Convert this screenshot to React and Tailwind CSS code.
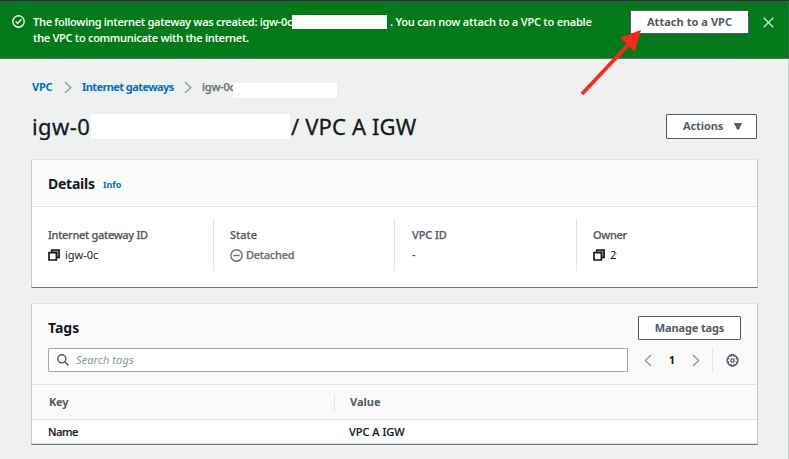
function Chevron({ left = false, className = "" }) {
  return (
    <svg className={`shrink-0 ${className}`} width="8" height="13" viewBox="0 0 8 13" fill="none" stroke="currentColor" strokeWidth="1.6">
      <path d={left ? "M7 1 1.3 6.5 7 12" : "M1 1l5.7 5.5L1 12"} />
    </svg>
  );
}

function CopyIcon() {
  return (
    <svg className="shrink-0" width="12" height="12" viewBox="0 0 12 12" fill="none">
      <path d="M3.7 3V1h7.4v7.4H9" fill="#9a9da1" stroke="#16191f" strokeWidth="1.6" />
      <path d="M1 3.6h7.4V11H1z" fill="#fff" stroke="#16191f" strokeWidth="1.7" />
    </svg>
  );
}

function Field({ label, labelClass = "", children, className = "" }) {
  return (
    <div className={`h-[52px] pt-[7px] ${className}`}>
      <div className={`h-5 leading-[18px] font-medium text-[#545b64] [-webkit-text-stroke:0.25px_#545b64] ${labelClass}`}>{label}</div>
      <div className="flex h-[18px] items-center">{children}</div>
    </div>
  );
}

export default function App() {
  return (
    <div className="relative flex h-[459px] w-[789px] flex-col overflow-hidden bg-[#eff1f1] font-['Noto_Sans','Open_Sans',sans-serif] text-[11px] whitespace-nowrap text-[#16191f]">
      <div className="h-px shrink-0 bg-[#232f3e]" />
      <header className="flex h-[58px] shrink-0 border-t border-r border-b border-t-[#3d5a45] border-r-[#37663f] border-b-[#687078] bg-[#037a19] pl-3 text-[#f2f8f2]">
        <svg className="mt-[13px] shrink-0" width="13" height="13" viewBox="0 0 13 13" fill="none" stroke="currentColor" strokeWidth="1.4">
          <circle cx="6.5" cy="6.5" r="5.7" />
          <path d="m3.6 6.6 2 2 3.7-4" />
        </svg>
        <div className="ml-2 w-[597px] pt-[12px] font-semibold leading-4">
          <div className="flex h-4 items-center">
            <span className="w-[259px] overflow-hidden tracking-[-0.32px]">The following internet gateway was created: igw-0c</span>
            <span className="h-[14px] w-[95px] bg-white" />
            <span className="ml-[3px] tracking-[-0.23px]">. You can now attach to a VPC to enable</span>
          </div>
          <div className="tracking-[-0.32px]">the VPC to communicate with the internet.</div>
        </div>
        <button className="mt-2 h-6 w-[119px] rounded-[1px] border border-[#545b64] bg-white font-bold leading-[22px] tracking-[0.05px] text-[#545b64]">Attach to a VPC</button>
        <svg className="mt-[15px] ml-[14px]" width="11" height="11" viewBox="0 0 11 11" stroke="#d5ead7" strokeWidth="1.3">
          <path d="M.7.7l9.6 9.6M10.3.7.7 10.3" />
        </svg>
      </header>

      <main className="flex grow flex-col border-r border-[#c3c9c9] pr-[30px] pl-[31px]">
        <nav className="mt-[18px] flex h-5 items-center pl-px font-bold text-[#0073bb]">
          <a className="w-[32px] shrink-0 tracking-[-0.2px]">VPC</a>
          <Chevron className="text-[#95a5a6]" />
          <a className="ml-[10px] w-[102px] shrink-0 tracking-[-0.58px]">Internet gateways</a>
          <Chevron className="text-[#95a5a6]" />
          <span className="ml-[10px] w-[31px] shrink-0 overflow-hidden font-medium tracking-[-0.2px] text-[#687078] [-webkit-text-stroke:0.25px_#687078]">igw-0c</span>
          <span className="mt-[7px] h-[15px] w-[104px] bg-white" />
        </nav>
        <div className="mt-[16px] flex h-[27px] items-center pl-px">
          <h1 className="flex items-center text-[22px] leading-[27px] [-webkit-text-stroke:0.3px_#16191f]">
            <span className="w-[59px] overflow-hidden tracking-[0.4px]">igw-0c</span>
            <span className="h-[25px] w-[199px] bg-white" />
            <span className="ml-px tracking-[0.15px]">/ VPC A IGW</span>
          </h1>
          <button className="mr-px ml-auto flex h-[25px] w-[91px] items-center rounded-[1px] border border-[#545b64] bg-white pl-4 text-left font-bold text-[#545b64]">
            <span className="w-[51px] tracking-[-0.1px]">Actions</span>
            <svg width="8" height="7" viewBox="0 0 8 7" fill="currentColor"><path d="M0 0h8L5 6.5H3z" /></svg>
          </button>
        </div>

        <section className="mt-[19px] h-[129px] border border-t-[#e1e5e5] border-r-[#c3cacf] border-b-[#687b7c] border-l-[#c3cacf] bg-white">
          <div className="flex h-[47px] items-center border-b border-[#e1e5e5] bg-[#fafafa] pl-4">
            <h2 className="w-[55px] text-[14px] font-bold tracking-[-0.25px]">Details</h2>
            <a className="pt-[3px] text-[9px] font-bold text-[#0073bb]">Info</a>
          </div>
          <div className="mt-3 flex">
            <Field label="Internet gateway ID" labelClass="tracking-[-0.3px]" className="w-[182px] border-r border-[#e1e5e5] pl-4">
              <CopyIcon /><span className="ml-[5px] w-[34px] overflow-hidden">igw-0c</span>
            </Field>
            <Field label="State" className="w-[181px] border-r border-[#e1e5e5] pl-4">
              <svg width="13" height="13" viewBox="0 0 13 13" fill="none" stroke="#687078" strokeWidth="1.4"><circle cx="6.5" cy="6.5" r="5.7" /><path d="M3.3 6.5h6.4" /></svg>
              <span className="ml-[3px] font-medium tracking-[-0.25px] text-[#687078] [-webkit-text-stroke:0.25px_#687078]">Detached</span>
            </Field>
            <Field label="VPC ID" labelClass="tracking-[-0.1px]" className="w-[182px] border-r border-[#e1e5e5] pl-[17px]">
              <span className="font-semibold text-[#545b64]">-</span>
            </Field>
            <Field label="Owner" labelClass="tracking-[-0.3px]" className="pl-4">
              <CopyIcon /><span className="ml-[5px] w-[7px] overflow-hidden">29</span>
            </Field>
          </div>
        </section>

        <section className="mt-[15px] h-[142px] border border-t-[#e1e5e5] border-r-[#c3cacf] border-b-[#687b7c] border-l-[#c3cacf] bg-white">
          <div className="h-[81px] border-b border-[#e1e5e5] bg-[#fafafa] px-4 pt-3">
            <div className="flex h-6 items-center justify-between">
              <h2 className="pb-[2px] text-[14px] font-bold">Tags</h2>
              <button className="h-6 w-[103px] rounded-[1px] border border-[#545b64] bg-white font-bold leading-[22px] tracking-[-0.15px] text-[#545b64]">Manage tags</button>
            </div>
            <div className="mt-2 flex h-6 items-center">
              <div className="flex h-6 w-[580px] items-center rounded-[1px] border border-[#95a9a9] bg-white pl-2">
                <svg width="12" height="12" viewBox="0 0 12 12" fill="none" stroke="#545b64" strokeWidth="1.5"><circle cx="4.8" cy="4.8" r="4" /><path d="m7.7 7.7 3.7 3.7" /></svg>
                <span className="ml-[7px] tracking-[0.1px] text-[#87999b] italic">Search tags</span>
              </div>
              <Chevron left className="ml-4 text-[#95a5a6]" />
              <span className="ml-4 w-2 text-center font-bold">1</span>
              <Chevron className="ml-4 text-[#95a5a6]" />
              <span className="ml-3 h-6 w-px bg-[#e1e5e5]" />
              <svg className="ml-[13px]" width="13" height="13" viewBox="0 0 13 13" fill="none" stroke="#545b64" strokeWidth="1.4">
                <path d="M5.4.8h2.2l.4 1.3 1.2-.6 1.9 1.9-.7 1.2 1.5.5v2.7l-1.5.4.7 1.2-1.9 1.9-1.2-.7-.4 1.4H5.4L5 10.6l-1.2.7-1.900-1.900.7-1.200-1.500-.4V5.100l1.500-.5-.7-1.200 1.900-1.900 1.200.6z" />
                <circle cx="6.5" cy="6.5" r="1.6" />
              </svg>
            </div>
          </div>
          <div className="grid h-[35px] grid-cols-[303px_1fr] items-center border-b border-[#e1e5e5] bg-[#fafafa] font-bold text-[#545b64]">
            <div className="flex h-[17px] items-center border-r border-[#e1e5e5] pl-[17px] tracking-[-0.2px]">Key</div>
            <div className="pl-[15px]">Value</div>
          </div>
          <div className="grid h-[24px] grid-cols-[302px_1fr] items-center border-b border-[#e1e5e5] pt-px font-medium [-webkit-text-stroke:0.2px_#16191f]">
            <div className="pl-4 tracking-[-0.4px]">Name</div>
            <div className="pl-[15px]">VPC A IGW</div>
          </div>
        </section>
      </main>

      <svg className="pointer-events-none absolute top-[28px] left-[578px]" width="66" height="70" viewBox="0 0 66 70">
        <path d="M4 66 50 17" stroke="#ff261c" strokeWidth="3.8" fill="none" />
        <path d="M63 2 56.500 23.500 42 9.500z" fill="#ff261c" />
      </svg>
    </div>
  );
}
